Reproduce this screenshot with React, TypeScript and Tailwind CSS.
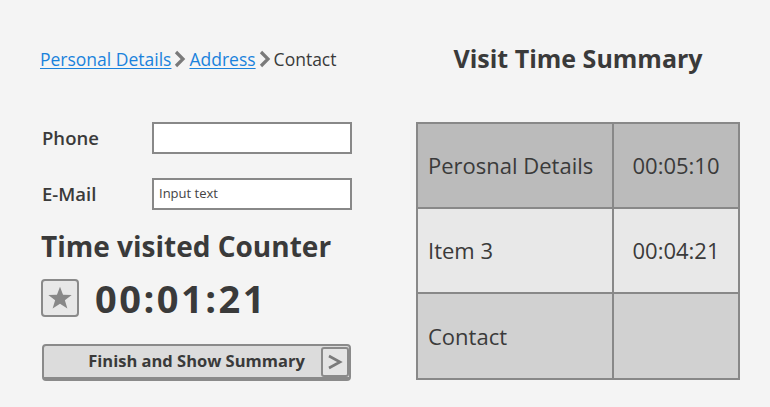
import React from "react";

const font = { fontFamily: "'Open Sans', 'Noto Sans', sans-serif" };

function Chevron() {
  return (
    <svg width="14" height="20" viewBox="0 0 14 20" className="mx-[2px]">
      <path d="M3 3 L10 10 L3 17" fill="none" stroke="#7a7a7a" strokeWidth="3.2" />
    </svg>
  );
}

export default function App() {
  return (
    <div className="w-[770px] h-[407px] bg-[#f4f4f4] text-[#3a3a3a] relative overflow-hidden" style={font}>
      <div className="flex pt-[32px]">
        {/* Left column */}
        <div className="w-[376px] pl-[40px] flex flex-col">
          <div className="flex items-center h-[54px] text-[17.5px]">
            <a className="text-[#1a82dc] underline underline-offset-2">Personal Details</a>
            <Chevron />
            <a className="text-[#1a82dc] underline underline-offset-2">Address</a>
            <Chevron />
            <span className="text-[#3a3a3a]">Contact</span>
          </div>
          <div className="flex items-center mt-[36px] h-[32px]">
            <span className="w-[112px] pl-[2px] text-[18.5px] font-semibold">Phone</span>
            <div className="w-[200px] h-[32px] bg-white border-2 border-[#888]" />
          </div>
          <div className="flex items-center mt-[24px] h-[32px]">
            <span className="w-[112px] pl-[2px] text-[18.5px] font-semibold">E-Mail</span>
            <div className="w-[200px] h-[32px] bg-white border-2 border-[#888] flex items-center pl-[5px] text-[13px] text-[#444]">
              Input text
            </div>
          </div>
          <div className="mt-[16px] pl-[1px] text-[28px] font-bold leading-[40px] h-[40px]">Time visited Counter</div>
          <div className="flex items-center mt-[13px] h-[38px] pl-[1px]">
            <div className="w-[38px] h-[38px] rounded-[4px] border-2 border-[#8a8a8a] bg-[#e8e8e8] flex items-center justify-center">
              <svg width="26" height="26" viewBox="0 0 24 24">
                <path d="M12 1.5 L14.8 9 L22.8 9.2 L16.5 14.1 L18.8 21.8 L12 17.3 L5.2 21.8 L7.5 14.1 L1.2 9.2 L9.2 9 Z" fill="#888888" />
              </svg>
            </div>
            <span className="ml-[16px] text-[38px] font-bold tracking-[2.5px] text-[#3a3a3a]">00:01:21</span>
          </div>
          <div className="mt-[27px] ml-[2px] w-[309px] h-[37px] rounded-[4px] border-2 border-b-[4px] border-[#8a8a8a] bg-[#dcdcdc] flex items-center relative">
            <span className="flex-1 text-center text-[16.5px] font-bold">Finish and Show Summary</span>
            <div className="absolute right-0 top-[1px] w-[28px] h-[30px] rounded-[3px] border-2 border-[#8a8a8a] bg-[#e4e4e4] flex items-center justify-center">
              <svg width="16" height="18" viewBox="0 0 16 18">
                <path d="M2 3 L13 9 L2 15" fill="none" stroke="#7a7a7a" strokeWidth="2.6" />
              </svg>
            </div>
          </div>
        </div>
        {/* Right column */}
        <div className="flex flex-col pl-[40px]">
          <div className="h-[54px] flex items-center justify-center w-[324px] text-[25px] font-bold">Visit Time Summary</div>
          <div className="mt-[36px] w-[324px] border-2 border-[#888] grid grid-cols-[196px_1fr] text-[22px]">
            <div className="h-[85px] bg-[#bbbbbb] border-r-2 border-b-2 border-[#888] flex items-center pl-[10px]">Perosnal Details</div>
            <div className="h-[85px] bg-[#bbbbbb] border-b-2 border-[#888] flex items-center justify-center">00:05:10</div>
            <div className="h-[85px] bg-[#e8e8e8] border-r-2 border-b-2 border-[#888] flex items-center pl-[10px]">Item 3</div>
            <div className="h-[85px] bg-[#e8e8e8] border-b-2 border-[#888] flex items-center justify-center">00:04:21</div>
            <div className="h-[84px] bg-[#d1d1d1] border-r-2 border-[#888] flex items-center pl-[10px]">Contact</div>
            <div className="h-[84px] bg-[#d1d1d1]" />
          </div>
        </div>
      </div>
    </div>
  );
}
